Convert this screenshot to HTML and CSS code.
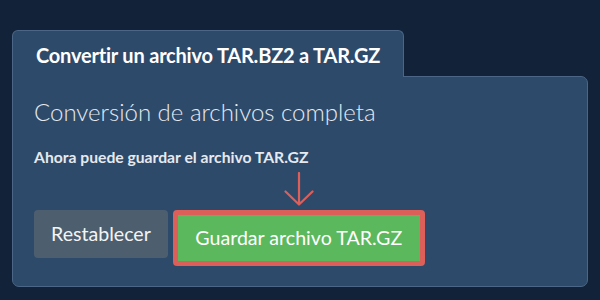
FILE: index.html
```html
<!DOCTYPE html>
<html lang="es">
<head>
<meta charset="utf-8">
<title>Convertir TAR.BZ2 a TAR.GZ</title>
<link rel="stylesheet" href="styles.css">
</head>
<body>
<div class="converter">
  <div class="tab">Convertir un archivo TAR.BZ2 a TAR.GZ</div>
  <div class="panel">
    <h2 class="status">Conversión de archivos completa</h2>
    <p class="hint">Ahora puede guardar el archivo TAR.GZ</p>
    <div class="actions">
      <button class="btn btn-reset" type="button">Restablecer</button>
      <div class="save-wrap">
        <svg class="arrow" width="30" height="34" viewBox="0 0 30 34" aria-hidden="true">
          <path d="M15 1 V32 M1.5 19.5 L15 32.5 L28.5 19.5" fill="none" stroke="#dc5f5a" stroke-width="2.2" stroke-linecap="round" stroke-linejoin="round"/>
        </svg>
        <button class="btn btn-save" type="button">Guardar archivo TAR.GZ</button>
      </div>
    </div>
  </div>
</div>
</body>
</html>
```

FILE: styles.css
```css
html, body {
  margin: 0;
  padding: 0;
}
body {
  background: #112239;
  font-family: Lato, "Open Sans", sans-serif;
  width: 600px;
  height: 300px;
  overflow: hidden;
}
.converter {
  padding: 30px 0 0 12px;
  display: flex;
  flex-direction: column;
  align-items: flex-start;
}
.tab {
  position: relative;
  z-index: 1;
  background: #2d4a6b;
  border: 1px solid #4b6686;
  border-bottom: none;
  border-radius: 6px 6px 0 0;
  padding: 12px 23px 0;
  margin-bottom: -1px;
  color: #ffffff;
  font-weight: 700;
  font-size: 20px;
  line-height: 24px;
  letter-spacing: -0.2px;
  height: 47px;
  box-sizing: border-box;
}
.panel {
  box-sizing: border-box;
  width: 576px;
  height: 211px;
  background: #2d4a6b;
  border: 1px solid #4b6686;
  border-radius: 0 7px 7px 7px;
  padding: 20px 21px 0;
}
.status {
  margin: 0;
  font-weight: 300;
  font-size: 24px;
  line-height: 29px;
  color: #e6e9ee;
}
.hint {
  margin: 22px 0 0;
  font-weight: 700;
  font-size: 15.7px;
  line-height: 19px;
  color: #e6e9ee;
}
.actions {
  margin-top: 43px;
  display: flex;
  align-items: flex-start;
  gap: 5px;
}
.btn {
  font-family: Lato, "Open Sans", sans-serif;
  font-size: 19.6px;
  font-weight: 400;
  color: #f4f4f4;
  cursor: pointer;
  margin: 0;
}
.btn-reset {
  background: #4d5e6f;
  border: none;
  border-radius: 4px;
  height: 48px;
  line-height: 48px;
  padding: 0 17px;
}
.save-wrap {
  position: relative;
}
.btn-save {
  background: #5cb85c;
  border: 5px solid #dc5f5a;
  border-radius: 4px;
  height: 56px;
  line-height: 46px;
  padding: 0 17.5px;
  color: #ffffff;
}
.arrow {
  position: absolute;
  left: 50%;
  bottom: 100%;
  margin-left: -15px;
  margin-bottom: 4px;
}
```
